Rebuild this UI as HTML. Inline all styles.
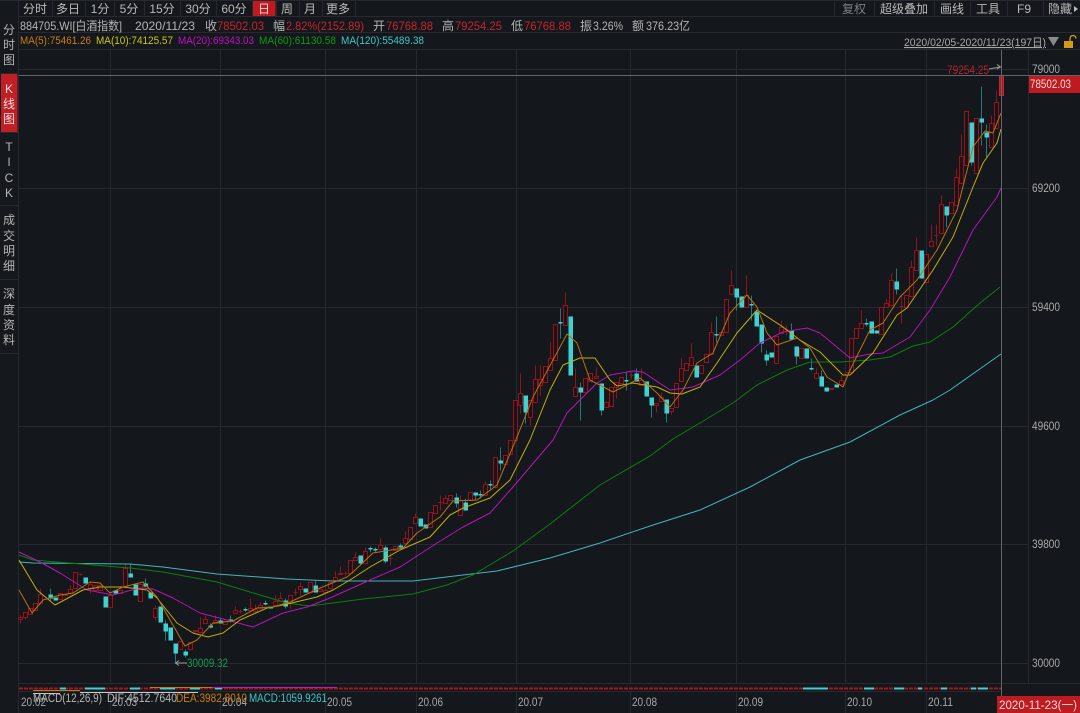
<!DOCTYPE html>
<html><head><meta charset="utf-8"><title>884705.WI</title>
<style>
html,body{margin:0;padding:0;background:#14171c;width:1080px;height:713px;overflow:hidden}
svg{display:block;position:absolute;left:0;top:0}
text{font-family:"Liberation Sans","Noto Sans CJK SC",sans-serif;font-size:12px;fill:#b4b4b4}
.r{fill:#c4262c}.t{fill:#b9b9b9;text-anchor:middle;font-size:12px}
.s{text-anchor:middle;font-size:12px;fill:#b4b4b4}
.m{font-size:11px}.x{font-size:11.500px;fill:#a8a8a8}
</style></head><body>
<svg width="1080" height="713" viewBox="0 0 1080 713" xmlns="http://www.w3.org/2000/svg">
<rect width="1080" height="713" fill="#14171c"/>
<rect x="0" y="0" width="18" height="713" fill="#15181d"/>
<!-- active -->
<rect x="252.500" y="1" width="23" height="15" fill="#bd1b20"/>
<rect x="1" y="74" width="16.500" height="58" fill="#bf1f25"/>
<rect x="1029" y="76" width="51" height="17" fill="#bd1b20"/>
<rect x="997" y="696" width="83" height="17" fill="#bd1b20"/>
<!-- frames -->
<g stroke="#26292f" stroke-width="1" fill="none" shape-rendering="crispEdges">
<path d="M0 .5H1080M18 16.500H1080M18 32.500H1080M18 49.500H1080"/>
<path d="M18.500 0V713M52.500 0V16M85.500 0V16M114.500 0V16M144.500 0V16M180.500 0V16M216.500 0V16M252.500 0V16M276.500 0V16M299.500 0V16M322.500 0V16M355.500 0V16M834.500 0V16M874.500 0V16M934.500 0V16M970.500 0V16M1007.500 0V16M1043.500 0V16"/>
<path d="M0 73.500H18M0 132.500H18M0 205.500H18M0 279.500H18M0 353.500H18"/>
<path d="M19 69.500H1028M19 188.500H1028M19 307.500H1028M19 426.500H1028M19 544.500H1028M19 663.500H1028"/>
<path d="M110.500 50V684M220.500 50V684M325.500 50V684M416.500 50V684M516.500 50V684M630.500 50V684M736.500 50V684M845.500 50V684M926.500 50V684"/>
<path d="M110.500 692V713M220.500 692V713M325.500 692V713M416.500 692V713M516.500 692V713M630.500 692V713M736.500 692V713M845.500 692V713M926.500 692V713"/>
<path d="M1028.500 50V684M18 683.500H1080M18 691.500H1000"/>
</g>
<!-- candles wicks -->
<g transform="translate(.5 .5)" fill="none" stroke-width="1" shape-rendering="crispEdges">
<path stroke="#94131a" d="M20 615V623M25 612V619M40 588V604M70 585V595M80 573V575M90 582V593M125 563V587M155 605V620M190 649V650M200 617V633M205 615V623M215 615V623M235 606V613M240 609V613M250 598V610M255 604V612M260 602V608M275 595V605M280 592V601M290 595V608M295 588V595M300 582V595M335 571V580M340 566V574M345 571V575M355 552V560M365 547V563M380 538V549M390 552V565M405 531V543M415 513V523M440 495V510M445 495V503M460 495V515M485 481V495M520 373V413M530 400V425M535 365V402M540 365V395M550 342V370M565 292V325M575 368V396M596 367V378M616 382V398M631 372V378M641 368V385M656 403V412M661 392V401M671 408V414M681 358V381M691 343V365M711 322V354M731 270V294M746 275V307M781 320V333M786 325V335M816 368V378M841 375V384M861 310V328M886 298V307M891 273V305M901 295V323M911 260V296M916 237V270M931 224V246M936 224V245M941 195V233M956 168V205M961 134V183M991 115V147M996 90V128"/>
<path stroke="#24777a" d="M50 588V600M130 563V577M145 578V587M165 620V640M175 643V663M185 649V657M210 623V628M220 617V623M230 615V622M245 607V611M265 600V605M285 598V608M315 580V592M360 555V565M370 546V552M375 547V552M385 545V563M400 543V548M456 493V507M465 498V510M475 492V500M480 490V498M490 480V490M500 447V470M525 395V423M560 308V338M570 316V375M580 382V420M601 383V415M626 372V390M636 368V381M646 381V396M651 397V417M666 399V422M716 316V342M736 288V310M751 295V320M761 324V352M766 350V365M791 323V339M796 346V364M811 358V370M821 370V386M866 318V326M871 321V333M896 268V294M946 206V227M971 122V165M981 86V145M986 124V157"/>
<!-- red bodies -->
<path stroke="#94131a" fill="#1a1318" d="M18 617h4v2h-4zM23 612h4v5h-4zM28 608h4v6h-4zM33 603h4v7h-4zM38 594h4v9h-4zM58 593h4v6h-4zM63 594h4v1h-4zM68 589h4v4h-4zM73 572h4v16h-4zM78 574h4M88 584h4v4h-4zM93 585h4v5h-4zM98 585h4v5h-4zM108 595h4v12h-4zM118 590h4v3h-4zM123 568h4v19h-4zM138 584h4v17h-4zM153 608h4v9h-4zM178 641h4v8h-4zM188 642h4v7h-4zM193 630h4v1h-4zM198 628h4v4h-4zM203 619h4v4h-4zM213 620h4v3h-4zM223 621h4v3h-4zM233 610h4v3h-4zM238 611h4M248 608h4v2h-4zM253 609h4v2h-4zM258 605h4v3h-4zM273 601h4v4h-4zM278 598h4v3h-4zM288 595h4v8h-4zM293 592h4M298 586h4v3h-4zM308 582h4v10h-4zM318 589h4v2h-4zM323 590h4v2h-4zM328 582h4v6h-4zM333 577h4v3h-4zM338 573h4v1h-4zM343 573h4M348 560h4v13h-4zM353 557h4v3h-4zM363 551h4v12h-4zM378 545h4v4h-4zM388 558h4M393 546h4v4h-4zM403 538h4v5h-4zM408 527h4v12h-4zM413 517h4v6h-4zM428 512h4v15h-4zM433 505h4v8h-4zM438 502h4M443 498h4v5h-4zM448 495h4v5h-4zM458 500h4v15h-4zM468 492h4v8h-4zM483 484h4v11h-4zM493 457h4v30h-4zM503 455h4v9h-4zM508 440h4v14h-4zM513 400h4v40h-4zM518 393h4v12h-4zM528 400h4v17h-4zM533 379h4v23h-4zM538 379h4v6h-4zM543 366h4v16h-4zM548 358h4v12h-4zM553 324h4v36h-4zM563 305h4v20h-4zM573 387h4v9h-4zM583 378h4v14h-4zM588 373h4v8h-4zM594 376h4v2h-4zM604 402h4v5h-4zM609 387h4v19h-4zM614 382h4v5h-4zM619 377h4v6h-4zM629 375h4M639 380h4v5h-4zM654 403h4v2h-4zM659 397h4v4h-4zM669 408h4v3h-4zM674 383h4v24h-4zM679 368h4v13h-4zM684 363h4v7h-4zM689 357h4v8h-4zM699 365h4v8h-4zM704 354h4v8h-4zM709 332h4v22h-4zM719 332h4v3h-4zM724 299h4v33h-4zM729 285h4v9h-4zM744 295h4v12h-4zM774 336h4v27h-4zM779 327h4v6h-4zM784 329h4M799 348h4v10h-4zM814 373h4v5h-4zM829 388h4v1h-4zM839 380h4v4h-4zM844 372h4M849 338h4v34h-4zM854 328h4v10h-4zM859 323h4v5h-4zM879 307h4v27h-4zM884 303h4v4h-4zM889 280h4v25h-4zM899 306h4M904 295h4v12h-4zM909 267h4v29h-4zM914 250h4v20h-4zM924 254h4v28h-4zM929 241h4v5h-4zM934 235h4M939 204h4v29h-4zM949 202h4v11h-4zM954 177h4v28h-4zM959 156h4v27h-4zM964 111h4v54h-4zM974 118h4v55h-4zM989 123h4v24h-4zM994 102h4v26h-4z"/>
<path stroke="#c01d22" d="M1001 66V95"/>
<path stroke="#c8232a" fill="#a8191f" d="M999 75h4v20h-4z"/>
<!-- cyan bodies -->
<path stroke="#3ed3d3" stroke-width="4.500" d="M50 594V598M55 597V600M85 577V583M105 596V607M115 590V593M130 573V577M135 584V595M145 583V586M150 592V598M160 606V622M165 623V631M170 627V640M175 643V653M185 651V655M210 625V627M220 620V623M230 619V621M270 606V608M285 600V606M305 588V592M315 585V592M360 555V563M385 547V561M400 545V547M420 518V526M425 524V528M456 497V503M465 502V510M475 492V495M500 460V463M525 395V412M570 316V375M580 387V392M601 383V410M636 373V381M646 381V396M651 397V405M666 399V413M696 365V377M736 288V297M741 296V307M756 311V326M761 324V343M766 354V360M771 352V357M791 330V339M796 346V356M806 348V358M821 376V386M826 387V391M836 384V387M871 321V333M876 330V333M896 281V289M921 250V278M946 206V215M971 122V162M981 118V122M986 132V137"/>
<path stroke="#3ed3d3" stroke-width="1.500" d="M243 609h4M263 603h4M368 548h4M373 549h4M478 494h4M488 484h4M558 322h4M624 380h4M714 334h4M749 304h4M809 368h4M864 323h4"/>
</g>
<!-- MA lines -->
<g fill="none" stroke-width="1" stroke-linejoin="round">
<polyline stroke="#45b5b8" points="19,562 33,563 130,564 163,567 217,574 287,579 333,581 413,581 463,575 497,571 550,558 600,543 650,526 700,510 750,487 800,460 850,442 900,415 933,400 950,390 1001,354"/>
<polyline stroke="#0c7f0c" points="19,555 33,560 130,568 163,572 217,582 250,592 287,603 310,606 363,599 413,594 447,585 473,575 513,551 550,524 600,485 650,456 673,439 700,423 733,403 757,385 787,370 810,362 840,362 870,360 890,357 913,346 930,342 953,327 980,303 1000,287"/>
<polyline stroke="#b814b8" points="19,552 40,562 60,573 87,590 113,595 140,588 153,589 173,598 200,613 227,620 253,627 283,613 307,607 330,598 370,580 400,567 437,543 463,527 490,513 513,487 553,440 567,413 597,383 610,375 633,371 643,372 670,390 693,387 720,375 740,360 760,343 783,332 807,328 820,333 850,358 870,354 883,353 910,337 930,310 950,277 973,230 997,197 1001,188"/>
<polyline stroke="#c2ae10" points="19,560 37,590 55,605 83,590 100,587 123,587 147,590 157,598 177,623 193,633 208,637 223,633 240,620 267,608 283,605 317,597 333,590 350,580 370,567 400,550 430,537 450,515 463,508 490,498 510,480 530,440 550,390 563,365 580,358 595,358 610,380 617,386 633,383 657,387 670,393 682,394 700,387 717,363 737,333 757,310 783,327 800,340 820,352 843,375 850,375 873,353 897,315 907,308 933,270 953,237 973,187 983,163 997,143 1001,129"/>
<polyline stroke="#b8720f" points="19,590 32,613 43,600 60,595 73,593 90,582 100,583 110,593 123,587 143,582 157,597 170,620 185,646 197,640 213,623 233,621 257,608 273,607 290,602 320,588 347,577 353,572 373,553 403,548 417,533 440,517 453,501 477,500 497,485 517,437 533,397 553,360 567,334 577,343 590,380 613,392 623,387 640,378 657,393 670,407 683,390 697,363 713,353 730,313 747,295 757,307 767,333 777,345 797,338 810,348 827,377 843,387 850,370 870,330 883,323 900,297 917,280 937,250 957,210 973,147 985,131 993,133 1001,113"/>
</g>
<!-- crosshair -->
<g stroke="#63656a" stroke-width="1" shape-rendering="crispEdges"><path d="M19 75.500H1080M1001.500 50V696"/></g>
<!-- MACD strip -->
<g fill="none" shape-rendering="crispEdges">
<path stroke="#a8151b" stroke-width="2" stroke-dasharray="4 1" d="M19 688.500H1001"/>
<path stroke="#3ed3d3" stroke-width="2" d="M803 688.500H828M864 688.500H874M894 688.500H904M918 688.500H922M941 688.500H947M971 688.500H976M978 688.500H988M60 688.500H66M85 688.500H105M130 688.500H140M160 688.500H175M190 688.500H200M215 688.500H222"/>
<path stroke="#c016c0" stroke-width="1" d="M212 687.500H337"/>
<path stroke="#c47a12" stroke-width="1" d="M150 687.500H212M33 690.500H80"/>
<path stroke="#c9c9c9" stroke-width="1" d="M33 693.500H60M80 692.500H198"/>
</g>
<!-- tabs -->
<g>
<text class="t" x="35" y="13">分时</text><text class="t" x="68" y="13">多日</text><text class="t" x="100" y="13">1分</text><text class="t" x="129" y="13">5分</text><text class="t" x="162" y="13">15分</text><text class="t" x="198" y="13">30分</text><text class="t" x="234" y="13">60分</text><text class="t" x="264" y="13" style="fill:#f0d8d8">日</text><text class="t" x="287" y="13">周</text><text class="t" x="310" y="13">月</text><text class="t" x="338" y="13">更多</text>
<text class="t" x="854" y="13" style="fill:#7c7f84">复权</text><text class="t" x="904" y="13">超级叠加</text><text class="t" x="952" y="13">画线</text><text class="t" x="988" y="13">工具</text><text class="t" x="1024" y="13">F9</text><text class="t" x="1060" y="13">隐藏</text><path d="M1074 6l4 3-4 3z" fill="#b9b9b9"/>
</g>
<!-- left -->
<g>
<text class="s" x="9" y="34">分</text><text class="s" x="9" y="49">时</text><text class="s" x="9" y="64">图</text>
<text class="s" x="9" y="93" style="fill:#f2dcdc">K</text><text class="s" x="9" y="108" style="fill:#f2dcdc">线</text><text class="s" x="9" y="123" style="fill:#f2dcdc">图</text>
<text class="s" x="9" y="151">T</text><text class="s" x="9" y="166">I</text><text class="s" x="9" y="182">C</text><text class="s" x="9" y="197">K</text>
<text class="s" x="9" y="224">成</text><text class="s" x="9" y="240">交</text><text class="s" x="9" y="255">明</text><text class="s" x="9" y="270">细</text>
<text class="s" x="9" y="298">深</text><text class="s" x="9" y="314">度</text><text class="s" x="9" y="329">资</text><text class="s" x="9" y="344">料</text>
</g>
<!-- info row -->
<g>
<text x="20" y="30" textLength="102" lengthAdjust="spacingAndGlyphs">884705.WI[白酒指数]</text>
<text x="135" y="30" textLength="60" lengthAdjust="spacingAndGlyphs">2020/11/23</text>
<text x="205" y="30">收</text><text class="r" x="217" y="30" textLength="47" lengthAdjust="spacingAndGlyphs">78502.03</text>
<text x="273" y="30">幅</text><text class="r" x="286" y="30" textLength="78" lengthAdjust="spacingAndGlyphs">2.82%(2152.89)</text>
<text x="373" y="30">开</text><text class="r" x="386" y="30" textLength="47" lengthAdjust="spacingAndGlyphs">76768.88</text>
<text x="442" y="30">高</text><text class="r" x="455" y="30" textLength="47" lengthAdjust="spacingAndGlyphs">79254.25</text>
<text x="511" y="30">低</text><text class="r" x="524" y="30" textLength="47" lengthAdjust="spacingAndGlyphs">76768.88</text>
<text x="580" y="30">振</text><text x="593" y="30" textLength="30" lengthAdjust="spacingAndGlyphs">3.26%</text>
<text x="632" y="30">额</text><text x="646" y="30" textLength="44" lengthAdjust="spacingAndGlyphs">376.23亿</text>
</g>
<!-- MA row -->
<g>
<text class="m" style="fill:#c87d10" x="20" y="44" textLength="71" lengthAdjust="spacingAndGlyphs">MA(5):75461.26</text>
<text class="m" style="fill:#c8c810" x="96" y="44" textLength="77" lengthAdjust="spacingAndGlyphs">MA(10):74125.57</text>
<text class="m" style="fill:#c010c0" x="178" y="44" textLength="76" lengthAdjust="spacingAndGlyphs">MA(20):69343.03</text>
<text class="m" style="fill:#109a10" x="259" y="44" textLength="77" lengthAdjust="spacingAndGlyphs">MA(60):61130.58</text>
<text class="m" style="fill:#3cc8c8" x="341" y="44" textLength="83" lengthAdjust="spacingAndGlyphs">MA(120):55489.38</text>
<text class="m" style="fill:#a8a8a8;text-decoration:underline" x="904" y="46" textLength="142" lengthAdjust="spacingAndGlyphs">2020/02/05-2020/11/23(197日)</text>
</g>
<path d="M1048 37h11l-5.500 9z" fill="#8a8a8a"/>
<g fill="none"><path d="M1070 41v-2.500a3 3 0 0 1 6 0" stroke="#d39a1a" stroke-width="1.300"/><rect x="1064" y="41" width="9" height="7" fill="#d39a1a"/></g>
<!-- axis -->
<g class="x">
<text class="x" x="1032" y="73" textLength="28" lengthAdjust="spacingAndGlyphs">79000</text>
<text class="x" x="1032" y="192" textLength="28" lengthAdjust="spacingAndGlyphs">69200</text>
<text class="x" x="1032" y="311" textLength="28" lengthAdjust="spacingAndGlyphs">59400</text>
<text class="x" x="1032" y="430" textLength="28" lengthAdjust="spacingAndGlyphs">49600</text>
<text class="x" x="1032" y="548" textLength="28" lengthAdjust="spacingAndGlyphs">39800</text>
<text class="x" x="1032" y="667" textLength="28" lengthAdjust="spacingAndGlyphs">30000</text>
<text class="x" style="fill:#f0dcdc" x="1030" y="88" textLength="41" lengthAdjust="spacingAndGlyphs">78502.03</text>
</g>
<text x="947" y="74" textLength="42" lengthAdjust="spacingAndGlyphs" style="font-size:11.500px;fill:#b5222a">79254.25</text>
<path d="M989 69L1000 67M997 64.500L1000.500 67L997 69" fill="none" stroke="#9a9a9a"/>
<text x="187" y="667" textLength="41" lengthAdjust="spacingAndGlyphs" style="font-size:11.500px;fill:#169a50">30009.32</text>
<path d="M187 663H176M179 660.500L175.500 663L179 665.500" fill="none" stroke="#9a9a9a"/>
<!-- bottom -->
<g>
<text class="x" x="21" y="706" textLength="25" lengthAdjust="spacingAndGlyphs">20.02</text>
<text class="x" x="112" y="706" textLength="25" lengthAdjust="spacingAndGlyphs">20.03</text>
<text class="x" x="222" y="706" textLength="25" lengthAdjust="spacingAndGlyphs">20.04</text>
<text class="x" x="327" y="706" textLength="25" lengthAdjust="spacingAndGlyphs">20.05</text>
<text class="x" x="418" y="706" textLength="25" lengthAdjust="spacingAndGlyphs">20.06</text>
<text class="x" x="518" y="706" textLength="25" lengthAdjust="spacingAndGlyphs">20.07</text>
<text class="x" x="632" y="706" textLength="25" lengthAdjust="spacingAndGlyphs">20.08</text>
<text class="x" x="738" y="706" textLength="25" lengthAdjust="spacingAndGlyphs">20.09</text>
<text class="x" x="847" y="706" textLength="25" lengthAdjust="spacingAndGlyphs">20.10</text>
<text class="x" x="928" y="706" textLength="25" lengthAdjust="spacingAndGlyphs">20.11</text>
<text x="33" y="702" textLength="69" lengthAdjust="spacingAndGlyphs" style="font-size:11.500px;fill:#b8b8b8">MACD(12,26,9)</text>
<text x="107" y="702" textLength="70" lengthAdjust="spacingAndGlyphs" style="font-size:11.500px;fill:#b8b8b8">DIF:4512.7640</text>
<text x="176" y="702" textLength="71" lengthAdjust="spacingAndGlyphs" style="font-size:11.500px;fill:#c87d10">DEA:3982.8010</text>
<text x="249" y="702" textLength="78" lengthAdjust="spacingAndGlyphs" style="font-size:11.500px;fill:#3cc8c8">MACD:1059.9261</text>
<text x="999" y="709" textLength="78" lengthAdjust="spacingAndGlyphs" style="font-size:11.500px;fill:#f0dcdc">2020-11-23(一)</text>
</g>
</svg>
</body></html>
